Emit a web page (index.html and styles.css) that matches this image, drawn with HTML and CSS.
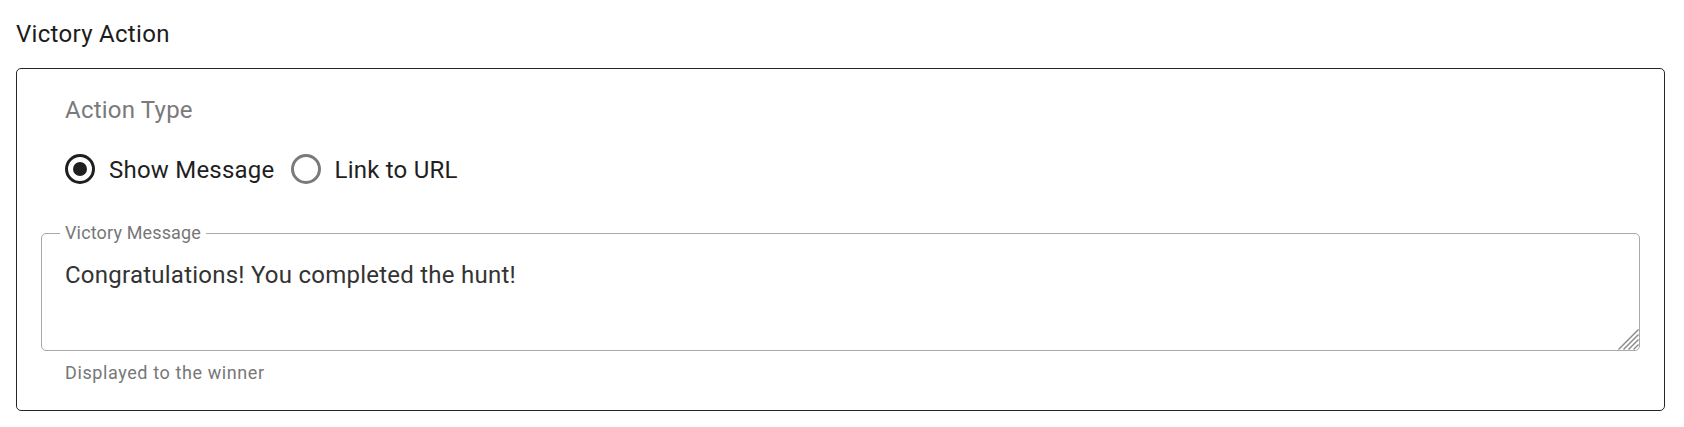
FILE: index.html
```html
<!DOCTYPE html>
<html lang="en">
<head>
<meta charset="utf-8">
<title>Victory Action</title>
<link rel="stylesheet" href="styles.css">
</head>
<body>
  <h2 class="section-title">Victory Action</h2>
  <div class="card">
    <div class="action-type">
      <div class="group-label">Action Type</div>
      <div class="radio-group" role="radiogroup">
        <label class="radio-item">
          <span class="radio radio-checked"><span class="radio-dot"></span></span>
          <span class="radio-text">Show Message</span>
        </label>
        <label class="radio-item">
          <span class="radio radio-unchecked"></span>
          <span class="radio-text">Link to URL</span>
        </label>
      </div>
    </div>
    <div class="field">
      <div class="field-box">
        <span class="field-label">Victory Message</span>
        <textarea class="field-input" rows="2">Congratulations! You completed the hunt!</textarea>
        <svg class="resize-grip" width="22" height="22" viewBox="0 0 22 22" aria-hidden="true">
          <g stroke="#8a8a8a" stroke-width="1.4" stroke-linecap="square">
            <line x1="21" y1="2" x2="2" y2="21"/>
            <line x1="21" y1="7" x2="7" y2="21"/>
            <line x1="21" y1="12" x2="12" y2="21"/>
            <line x1="21" y1="17" x2="17" y2="21"/>
          </g>
        </svg>
      </div>
      <div class="helper">Displayed to the winner</div>
    </div>
  </div>
</body>
</html>
```
FILE: styles.css
```css
html, body {
  margin: 0;
  background: #ffffff;
}

body {
  padding: 16px 19px 0 16px;
  font-family: Roboto, "Liberation Sans", Arial, sans-serif;
  color: #1f1f1f;
}

.section-title {
  margin: 0 0 16px 0;
  font-size: 24px;
  line-height: 36px;
  font-weight: 400;
  color: #1c1c1c;
  letter-spacing: 0.3px;
}

.card {
  border: 1px solid #262626;
  border-radius: 5px;
  padding: 23px 24px 22px 24px;
}

.action-type {
  padding-left: 24px;
}

.group-label {
  font-size: 24px;
  line-height: 36px;
  color: #7a7a7a;
  letter-spacing: 0.22px;
}

.radio-group {
  display: flex;
  align-items: center;
  gap: 16px;
  margin-top: 26px;
}

.radio-item {
  display: flex;
  align-items: center;
  gap: 14px;
  height: 30px;
  font-size: 24px;
  line-height: 30px;
  color: #1f1f1f;
  letter-spacing: 0.22px;
}

.radio {
  box-sizing: border-box;
  width: 30px;
  height: 30px;
  border-radius: 50%;
  display: flex;
  align-items: center;
  justify-content: center;
  flex: none;
}

.radio-checked {
  border: 3px solid #1f1f1f;
}

.radio-dot {
  width: 14px;
  height: 14px;
  border-radius: 50%;
  background: #1f1f1f;
}

.radio-unchecked {
  border: 3px solid #7a7a7a;
}

.radio-text {
  position: relative;
  top: 1px;
}

.field {
  margin-top: 49px;
}

.field-box {
  position: relative;
  display: flex;
}

.field-label {
  position: absolute;
  left: 19px;
  top: -9px;
  padding: 0 5px;
  background: #ffffff;
  font-size: 18px;
  line-height: 18px;
  color: #777777;
  letter-spacing: 0.15px;
}

.field-input {
  display: block;
  flex: 1;
  box-sizing: border-box;
  height: 118px;
  margin: 0;
  padding: 24px 21px 23px 23px;
  border: 1px solid #a9a9a9;
  border-radius: 5px;
  font-family: Roboto, "Liberation Sans", Arial, sans-serif;
  font-size: 24px;
  line-height: 34.5px;
  letter-spacing: 0.24px;
  color: #333333;
  background: #ffffff;
  resize: none;
  outline: none;
  overflow: hidden;
}

.resize-grip {
  position: absolute;
  right: 1px;
  bottom: 1px;
  pointer-events: none;
}

.helper {
  margin: 7px 21px 0 24px;
  font-size: 18px;
  line-height: 30px;
  color: #777777;
  letter-spacing: 0.6px;
}
```
